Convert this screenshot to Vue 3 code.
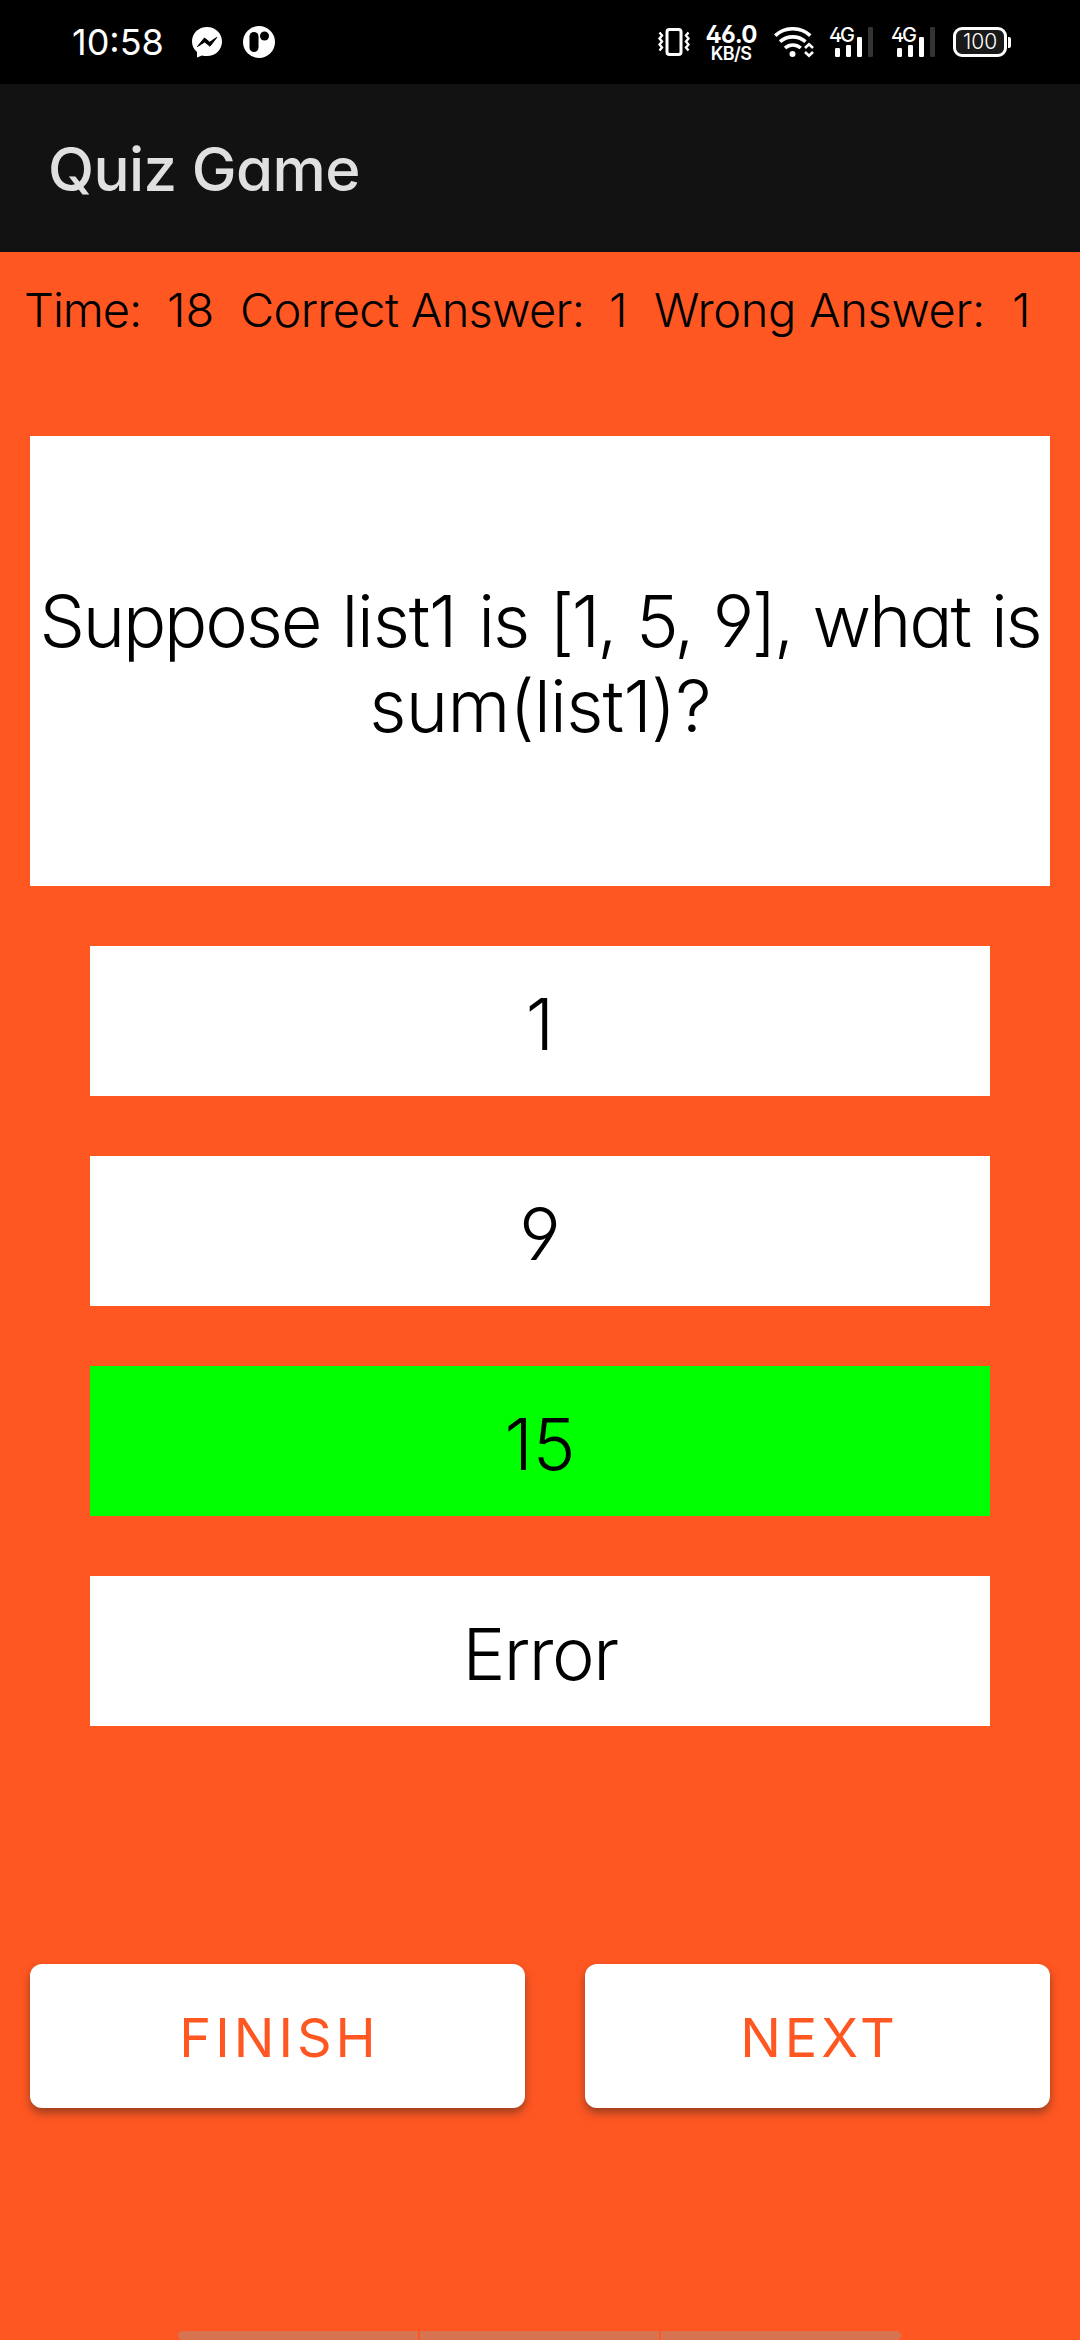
<script setup>
const options = [
  { text: '1' },
  { text: '9' },
  { text: '15', correct: true },
  { text: 'Error', word: true },
]
const sims = [0, 1]
</script>

<template>
  <div class="screen">
    <header class="status">
      <span class="clock">10:58</span>
      <svg class="messenger" viewBox="0 0 30 31">
        <path fill="#fff" d="M15 0C6.600 0 0 6.200 0 14.400c0 4.300 1.700 7.800 5 10.600V30.500l5-2c1.600.4 3.200.6 5 .6 8.400 0 15-6.300 15-14.600S23.400 0 15 0Z" />
        <path d="M5.500 19.500l7-8.500 5.200 4.200 7-4.700-6.700 8.700-5.300-4.200Z" stroke="#000" stroke-width="1" stroke-linejoin="round" />
      </svg>
      <svg class="badge" viewBox="0 0 32 32">
        <circle cx="16" cy="16" r="16" fill="#fff" />
        <rect x="6.500" y="6" width="9" height="20" rx="4.500" />
        <circle cx="21.500" cy="10" r="4.500" />
      </svg>
      <span class="spacer"></span>
      <svg class="vibrate" viewBox="0 0 32 28">
        <g fill="none" stroke="#fff">
          <rect x="9" y="1.500" width="14" height="25" rx="2.500" stroke-width="3" />
          <path stroke-width="2.400" d="M1.500 4.500l2.500 3-2.500 3 2.500 3-2.500 3 2.500 3-2.500 3M30.500 4.500l-2.500 3 2.500 3-2.500 3 2.500 3-2.500 3 2.500 3" />
        </g>
      </svg>
      <div class="speed"><b>46.0</b><span>KB/S</span></div>
      <svg class="wifi" viewBox="0 0 40 31">
        <g fill="none" stroke="#fff" stroke-width="3.600">
          <path d="M1.200 8.600C11.500-.5 26-.5 36.300 8.600" />
          <path d="M6 14.700c7.500-6.500 18-6.500 25.500 0" />
          <path d="M11 21c4.700-4 11-4 15.700 0" />
        </g>
        <circle cx="18.500" cy="27" r="3" fill="#fff" />
        <path fill="none" stroke="#fff" stroke-width="2.600" d="M31 21l4-3.800 4 3.800M31 25l4 3.800 4-3.800" />
      </svg>
      <div v-for="s in sims" :key="s" class="sim">
        <span>4G</span>
        <svg viewBox="0 0 44 30">
          <g fill="#fff">
            <rect x="6" y="21" width="5" height="9" rx="1.200" />
            <rect x="17" y="18" width="5" height="12" rx="1.200" />
            <rect x="28" y="10" width="5" height="20" rx="1.200" />
          </g>
          <rect x="39" y="0" width="5" height="30" rx="1.200" fill="#333" />
        </svg>
      </div>
      <div class="battery"><span>100</span></div>
      <i class="nub"></i>
    </header>

    <div class="appbar"><h1>Quiz Game</h1></div>

    <main>
      <div class="stats">
        <span class="s-time">Time:</span><span class="s-left">18</span>
        <span class="s-correct">Correct Answer:</span><span class="s-hits">1</span>
        <span class="s-wrong">Wrong Answer:</span><span class="s-miss">1</span>
      </div>

      <section class="question">
        <span class="line1">Suppose <span class="loose">list1 </span>is <span class="tight">[1, 5, 9], </span>what is</span>
        <span class="line2">sum(list1)?</span>
      </section>

      <div class="options">
        <div v-for="o in options" :key="o.text" class="option" :class="{ correct: o.correct, word: o.word }">{{ o.text }}</div>
      </div>

      <div class="actions">
        <button class="finish">FINISH</button>
        <button class="next">NEXT</button>
      </div>

      <div class="dock"><i></i><i></i><i></i></div>
    </main>
  </div>
</template>

<style>
body { background: #ff5722; }
</style>

<style scoped>
.screen {
  width: 1080px;
  height: 2340px;
  overflow: hidden;
  display: flex;
  flex-direction: column;
  background: #ff5722;
  color: #000;
  font-family: Inter, "Noto Sans", sans-serif;
  font-weight: 340;
  font-feature-settings: "cv11" 1, "ss01" 1;
  white-space: nowrap;
}
.status {
  height: 84px;
  box-sizing: border-box;
  padding: 0 69px 0 71px;
  display: flex;
  align-items: center;
  background: #000;
  color: #fff;
}
.status svg { display: block; flex: none; }
.clock { width: 121px; font-size: 36px; font-weight: 400; text-indent: 1px; }
.messenger { width: 30px; height: 31px; }
.badge { width: 32px; height: 32px; margin-left: 21px; }
.spacer { flex: 1; }
.vibrate { width: 32px; height: 28px; margin-right: 16px; }
.speed { width: 50px; display: flex; flex-direction: column; align-items: center; margin: 2px 18px 0 0; }
.speed b { font-size: 24px; line-height: 20px; font-weight: 650; letter-spacing: -0.9px; }
.speed span { font-size: 18px; line-height: 17px; font-weight: 600; letter-spacing: -0.6px; }
.wifi { width: 40px; height: 31px; margin-right: 15px; }
.sim { width: 44px; height: 30px; margin-right: 18px; position: relative; }
.sim svg { width: 44px; height: 30px; }
.sim span { position: absolute; left: 0; top: -1px; font-size: 20px; line-height: 18px; font-weight: 500; letter-spacing: -2.2px; }
.battery {
  width: 54px;
  height: 30px;
  box-sizing: border-box;
  border: 3px solid #fff;
  border-radius: 9px;
  background: #1a1a1a;
  display: flex;
  align-items: center;
  justify-content: center;
  font-size: 21px;
  line-height: 24px;
}
.nub { width: 3px; height: 11px; border-radius: 0 2px 2px 0; margin-left: 1px; background: #fff; }

.appbar {
  height: 168px;
  box-sizing: border-box;
  padding-left: 48px;
  display: flex;
  align-items: center;
  background: #121212;
}
h1 { margin: 2px 0 0; font-size: 60px; font-weight: 470; color: #e0e0e0; letter-spacing: -0.6px; }

main { flex: 1; display: flex; flex-direction: column; }
.stats { display: flex; height: 184px; box-sizing: border-box; padding: 28px 0 0 24px; font-size: 47px; line-height: 60px; }
.s-time { width: 143px; letter-spacing: -1px; }
.s-left { width: 73px; }
.s-correct { width: 369px; letter-spacing: -0.700px; }
.s-hits { width: 45px; }
.s-wrong { width: 358px; letter-spacing: -0.350px; }

.question {
  height: 450px;
  box-sizing: border-box;
  padding-top: 4px;
  margin: 0 30px;
  display: flex;
  flex-direction: column;
  align-items: center;
  justify-content: center;
  background: #fff;
  font-size: 72px;
  line-height: 85px;
}
.line1 { letter-spacing: -2.200px; word-spacing: 3.200px; }
.loose { letter-spacing: -1.200px; }
.tight { letter-spacing: -2.600px; }
.line2 { letter-spacing: -0.700px; }
.options { display: flex; flex-direction: column; gap: 60px; margin: 60px 90px 0; }
.option {
  height: 150px;
  box-sizing: border-box;
  padding-top: 4px;
  display: flex;
  align-items: center;
  justify-content: center;
  background: #fff;
  font-size: 72px;
}
.option.correct { background: #0f0; }
.option.word { letter-spacing: -1.500px; }
.actions { display: flex; gap: 60px; margin: 238px 30px 0; }
button {
  height: 144px;
  padding: 3px 0 0;
  border: 0;
  border-radius: 12px;
  background: #fff;
  color: #ff5722;
  font: 440 54px Inter, sans-serif;
  letter-spacing: 4px;
  text-indent: 4px;
  box-shadow: 0 5px 9px rgba(60, 40, 30, 0.5);
}
.finish { width: 495px; }
.next { width: 465px; }
.dock { display: flex; gap: 2px; width: 723px; height: 9px; margin: auto auto 0 178px; border-radius: 5px; overflow: hidden; }
.dock i { flex: 1; background: #d77350; }
</style>
